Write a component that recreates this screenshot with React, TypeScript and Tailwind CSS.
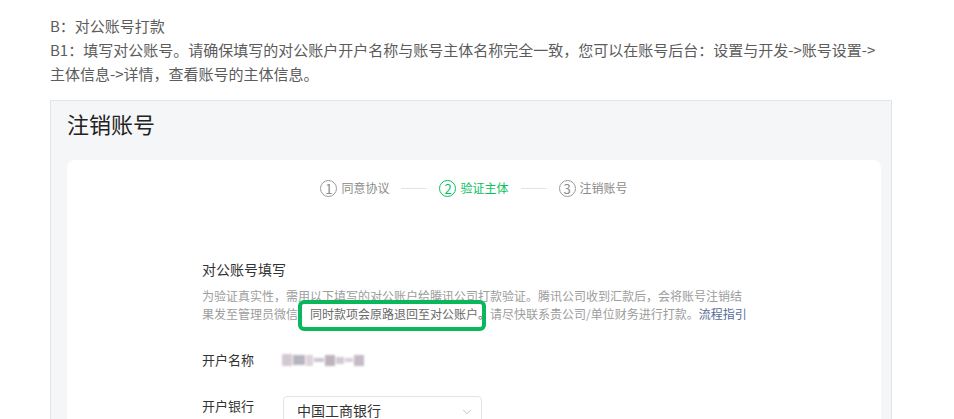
import { ChevronDown } from "lucide-react"

const steps = [
  { n: "1", label: "同意协议", active: false },
  { n: "2", label: "验证主体", active: true },
  { n: "3", label: "注销账号", active: false },
]

function Steps() {
  return (
    <div className="flex items-center justify-center text-[12px] leading-5">
      {steps.map((s, i) => (
        <div key={s.n} className="flex items-center">
          {i > 0 && <div className="mx-[12px] h-px w-[26px] bg-[#e2e2e2]" />}
          <div
            className={
              s.active
                ? "flex h-[17px] w-[17px] items-center justify-center rounded-full border border-[#07c160] text-[13px] leading-none text-[#07c160]"
                : "flex h-[17px] w-[17px] items-center justify-center rounded-full border border-[#9a9a9a] text-[13px] leading-none text-[#8a8a8a]"
            }
          >
            {s.n}
          </div>
          <span className={s.active ? "ml-[4px] text-[#07c160]" : "ml-[4px] text-[#8a8a8a]"}>{s.label}</span>
        </div>
      ))}
    </div>
  )
}

// mosaic stand-in for the blurred account name
function BlurredName() {
  return (
    <div className="flex h-[14px] items-center gap-[1px] blur-[0.8px]">
      <div className="h-[12px] w-[10px] bg-[#d4c9d1]" />
      <div className="h-[10px] w-[12px] bg-[#b7b4c2]" />
      <div className="h-[11px] w-[7px] bg-[#ddd3da]" />
      <div className="h-[4px] w-[10px] bg-[#c9c6d0]" />
      <div className="h-[11px] w-[10px] bg-[#bdb3bd]" />
      <div className="h-[7px] w-[8px] bg-[#d3cad3]" />
      <div className="h-[4px] w-[8px] bg-[#d6cfd8]" />
      <div className="h-[11px] w-[10px] bg-[#c6bac4]" />
    </div>
  )
}

export default function App() {
  return (
    <div
      className="h-[419px] w-full overflow-hidden bg-white"
      style={{ fontFamily: '"Noto Sans CJK SC", "Noto Sans", sans-serif' }}
    >
      <div className="whitespace-nowrap pl-[50px] pt-[14px] text-[15px] leading-6 text-[#5c5c5c]">
        <p>B：对公账号打款</p>
        <p>B1：填写对公账号。请确保填写的对公账户开户名称与账号主体名称完全一致，您可以在账号后台：设置与开发-&gt;账号设置-&gt;</p>
        <p>主体信息-&gt;详情，查看账号的主体信息。</p>
      </div>

      <div className="ml-[50px] mt-[14px] w-[842px] border border-[#e3e4e6] bg-[#f5f6f8] pl-[16px] pr-[10px] pt-[7px]">
        <h1 className="text-[22px] leading-[30px] text-[#222]">注销账号</h1>

        <div className="mt-[22px] h-[300px] rounded-lg bg-white pt-[18px]">
          <Steps />

          <div className="pl-[135px] pt-[61px]">
            <h2 className="text-[14px] leading-5 text-[#333]">对公账号填写</h2>
            <div className="relative mt-[8px] whitespace-nowrap text-[12px] leading-[18px] text-[#9d9d9d]">
              <p>为验证真实性，需用以下填写的对公账户给腾讯公司打款验证。腾讯公司收到汇款后，会将账号注销结</p>
              <p>
                果发至管理员微信，<span className="text-[#6a6a6a]">同时款项会原路退回至对公账户。</span>请尽快联系贵公司/单位财务进行打款。
                <span className="text-[#576b95]">流程指引</span>
              </p>
              <div className="absolute left-[96px] top-[13px] h-[31px] w-[188px] rounded-[6px] border-4 border-[#0ab85b]" />
            </div>

            <div className="mt-[27px] flex items-center text-[13px] leading-5 text-[#333]">
              <span className="w-[80px]">开户名称</span>
              <BlurredName />
            </div>

            <div className="mt-[26px] flex items-start text-[13px] leading-5 text-[#333]">
              <span className="w-[81px]">开户银行</span>
              <div className="flex h-[36px] w-[199px] items-start justify-between rounded border border-[#e2e4e8] pl-[13px] pr-[7px] pt-[3px]">
                <span className="text-[14px] leading-5 text-[#333]">中国工商银行</span>
                <ChevronDown className="mt-[5px] text-[#bcbcbc]" size={14} strokeWidth={1.5} />
              </div>
            </div>
          </div>
        </div>
      </div>
    </div>
  )
}
